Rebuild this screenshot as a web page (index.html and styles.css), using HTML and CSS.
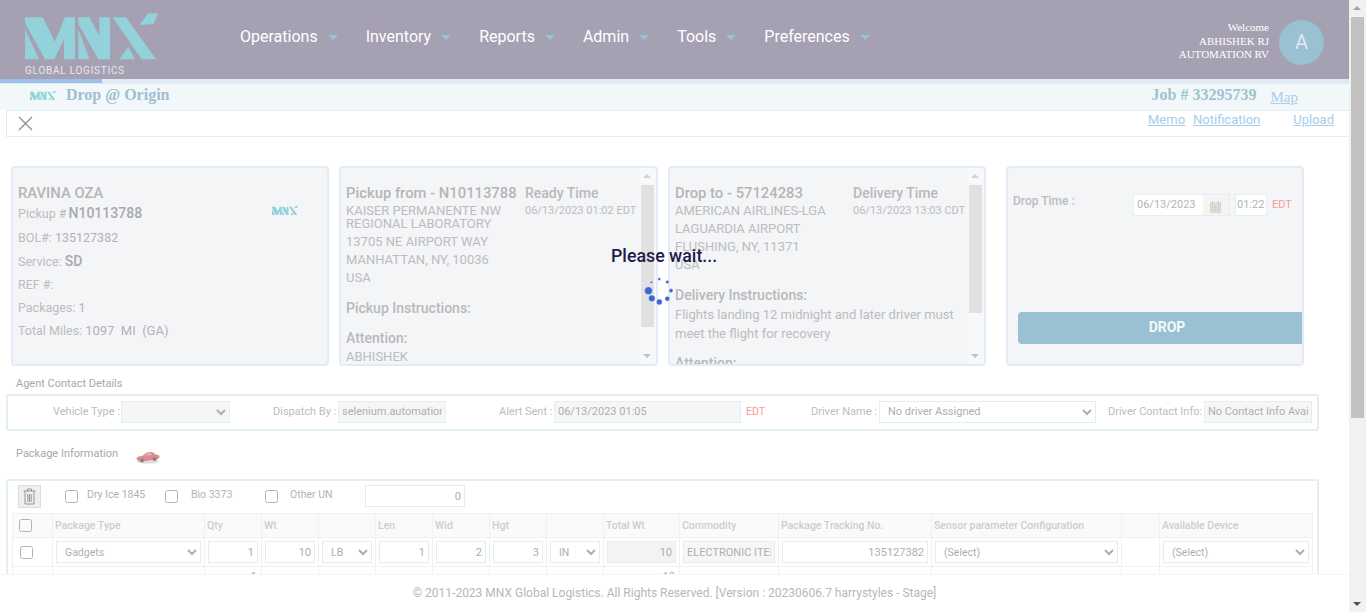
FILE: index.html
```html
<!DOCTYPE html>
<html lang="en">
<head>
    <meta charset="UTF-8">
    <title>Drop @ Origin</title>
    <link rel="stylesheet" href="styles.css">
</head>
<body>
<svg class="defs" width="0" height="0">
    <symbol id="mnx" viewBox="75 39 402 141">
        <polygon points="75,88 117,178 75,178"/>
        <polygon points="75,52 128,52 165,125 195,52 225,52 225,178 192,178 192,118 163,178 135,178 75,70"/>
        <polygon points="235,88 268,178 235,178"/>
        <polygon points="235,52 268,52 298,108 298,52 330,52 330,178 295,178 235,72"/>
        <polygon points="338,52 378,52 468,178 425,178"/>
        <polygon points="418,75 445,40 475,40 460,72"/>
        <polygon points="358,178 385,140 405,178"/>
    </symbol>
</svg>
<div id="page">
    <div id="main">
        <div id="header">
            <div class="brand">
                <svg class="brand-logo"><use href="#mnx"/></svg>
                <div class="brand-text">GLOBAL LOGISTICS</div>
            </div>
            <ul id="nav">
                <li>Operations</li>
                <li>Inventory</li>
                <li>Reports</li>
                <li>Admin</li>
                <li>Tools</li>
                <li>Preferences</li>
            </ul>
            <div class="welcome">Welcome<br>ABHISHEK RJ<br>AUTOMATION RV</div>
            <div class="avatar">A</div>
        </div>
        <div id="progress"><div class="progress-done"></div></div>
        <div id="subhead">
            <svg class="logo-small"><use href="#mnx"/></svg>
            <span class="page-title">Drop @ Origin</span>
            <span class="job-no">Job # 33295739</span>
            <a class="map-link">Map</a>
        </div>
        <div id="toolbar">
            <svg class="close-icon" width="15" height="15" viewBox="0 0 15 15"><path d="M1 1L14 14M14 1L1 14"/></svg>
            <a class="link memo">Memo</a>
            <a class="link notif">Notification</a>
            <a class="link upload">Upload</a>
        </div>

        <div id="cards">
            <div class="card card-job">
                <h3>RAVINA OZA</h3>
                <div class="pickup-row">
                    <span class="muted">Pickup #<b class="big">N10113788</b></span>
                    <svg class="logo-small"><use href="#mnx"/></svg>
                </div>
                <p class="muted">BOL#: <span class="val">135127382</span></p>
                <p class="muted p-service">Service: <b class="mid">SD</b></p>
                <p class="muted p-ref">REF #:</p>
                <p class="muted p-packages">Packages: <span class="val">1</span></p>
                <p class="muted miles">Total Miles: <span class="val miles-val">1097&nbsp; MI &nbsp;(GA)</span></p>
            </div>

            <div class="card card-stop card-pickup">
                <div class="stop-body">
                    <div class="stop-top">
                        <div class="stop-left">
                            <h3>Pickup from - N10113788</h3>
                            <div class="addr tight">KAISER PERMANENTE NW<br>REGIONAL LABORATORY</div>
                            <div class="addr">13705 NE AIRPORT WAY</div>
                            <div class="addr">MANHATTAN, NY, 10036</div>
                            <div class="addr">USA</div>
                        </div>
                        <div class="stop-right">
                            <h4>Ready Time</h4>
                            <div class="stamp">06/13/2023 01:02 EDT</div>
                        </div>
                    </div>
                    <h4 class="sect sect-pickup">Pickup Instructions:</h4>
                    <h4 class="sect sect-attn">Attention:</h4>
                    <div class="addr">ABHISHEK</div>
                </div>
                <div class="mini-scroll">
                    <i class="arr up"></i>
                    <div class="mini-thumb thumb-pickup"></div>
                    <i class="arr down"></i>
                </div>
            </div>

            <div class="card card-stop card-drop">
                <div class="stop-body">
                    <div class="stop-top">
                        <div class="stop-left">
                            <h3>Drop to - 57124283</h3>
                            <div class="addr">AMERICAN AIRLINES-LGA</div>
                            <div class="addr">LAGUARDIA AIRPORT</div>
                            <div class="addr">FLUSHING, NY, 11371</div>
                            <div class="addr">USA</div>
                        </div>
                        <div class="stop-right">
                            <h4>Delivery Time</h4>
                            <div class="stamp">06/13/2023 13:03 CDT</div>
                        </div>
                    </div>
                    <h4 class="sect sect-delivery">Delivery Instructions:</h4>
                    <div class="instr">Flights landing 12 midnight and later driver must meet the flight for recovery</div>
                    <h4 class="sect sect-attn2">Attention:</h4>
                </div>
                <div class="mini-scroll">
                    <i class="arr up"></i>
                    <div class="mini-thumb thumb-drop"></div>
                    <i class="arr down"></i>
                </div>
            </div>

            <div class="card card-action">
                <div class="time-row">
                    <span class="time-label">Drop Time :</span>
                    <div class="date-box">
                        <span class="date-val">06/13/2023</span>
                        <span class="date-addon">
                            <svg width="11" height="12" viewBox="0 0 11 12"><path class="cal" d="M0 2h11v10H0zM2.500 0v3M8.500 0v3"/><path class="cal-grid" d="M0 4.500h11M0 6.800h11M0 9.200h11M2.800 4.500V12M5.500 4.500V12M8.200 4.500V12"/></svg>
                        </span>
                    </div>
                    <span class="time-val">01:22</span>
                    <span class="edt">EDT</span>
                </div>
                <div class="drop-btn">DROP</div>
            </div>
        </div>

        <div class="sect-label agent-label">Agent Contact Details</div>
        <div id="agent" class="box">
            <label class="f-label l-vehicle">Vehicle Type :</label>
            <select class="ctl s-vehicle"><option></option></select>
            <label class="f-label l-dispatch">Dispatch By :</label>
            <input class="ctl ro s-dispatch" readonly value="selenium.automation">
            <label class="f-label l-alert">Alert Sent :</label>
            <input class="ctl ro s-alert" readonly value="06/13/2023 01:05">
            <span class="edt e-alert">EDT</span>
            <label class="f-label l-driver">Driver Name :</label>
            <select class="ctl s-driver"><option>No driver Assigned</option></select>
            <label class="f-label l-contact">Driver Contact Info:</label>
            <input class="ctl ro s-contact" readonly value="No Contact Info Available">
        </div>

        <div class="pkg-title">
            <span class="sect-label">Package Information</span>
            <svg class="car" width="24" height="15" viewBox="0 0 24 15">
                <ellipse cx="12" cy="12.500" rx="11" ry="2" fill="#dcdcdc"/>
                <path d="M0.500 9.500C1 7.500 5 7 7 6.500C9 4.500 11 3 14.500 3C17 3 19 5 20 5.500C22.500 6 24 6.500 23.500 8C23 10 21 10.500 19 10.500L6 12.500C3 12.500 0.500 11.500 0.500 9.500Z" fill="#e2898d"/>
                <path d="M8.500 6.500C10 5 12 4 14.500 4L16 6Z" fill="#c9c9cf"/>
                <circle cx="6" cy="11.500" r="2" fill="#8d7f80"/>
                <circle cx="18.500" cy="10" r="2" fill="#8d7f80"/>
            </svg>
        </div>

        <div id="pkg" class="box">
            <div class="pkg-tools">
                <div class="trash-btn">
                    <svg width="13" height="17" viewBox="0 0 13 17"><path d="M0.500 3h12M4.500 3V1h4v2M2 3v13h9V3M4.800 6v8M6.500 6v8M8.200 6v8"/></svg>
                </div>
                <input class="chk c-dry" type="checkbox"><span class="tool-label t-dry">Dry Ice 1845</span>
                <input class="chk" type="checkbox"><span class="tool-label t-bio">Bio 3373</span>
                <input class="chk" type="checkbox"><span class="tool-label t-other">Other UN</span>
                <input class="ctl num t-num" readonly value="0">
            </div>
            <table class="pkg-table">
                <colgroup>
                    <col class="w40"><col class="w152"><col class="w57"><col class="w57"><col class="w57"><col class="w57">
                    <col class="w57"><col class="w57"><col class="w57"><col class="w76"><col class="w99"><col class="w153">
                    <col class="w190"><col class="w38"><col class="w153">
                </colgroup>
                <tr class="head">
                    <th><input class="chk" type="checkbox"></th>
                    <th>Package Type</th><th>Qty</th><th>Wt</th><th></th><th>Len</th><th>Wid</th><th>Hgt</th><th></th>
                    <th>Total Wt</th><th>Commodity</th><th>Package Tracking No.</th><th>Sensor parameter Configuration</th><th></th><th>Available Device</th>
                </tr>
                <tr class="row">
                    <td><input class="chk" type="checkbox"></td>
                    <td><select class="ctl cell"><option>Gadgets</option></select></td>
                    <td><input class="ctl num cell" readonly value="1"></td>
                    <td><input class="ctl num cell" readonly value="10"></td>
                    <td><select class="ctl cell"><option>LB</option></select></td>
                    <td><input class="ctl num cell" readonly value="1"></td>
                    <td><input class="ctl num cell" readonly value="2"></td>
                    <td><input class="ctl num cell" readonly value="3"></td>
                    <td><select class="ctl cell"><option>IN</option></select></td>
                    <td><input class="ctl num ro cell" readonly value="10"></td>
                    <td><input class="ctl ro cell" readonly value="ELECTRONIC ITEM"></td>
                    <td><input class="ctl num cell" readonly value="135127382"></td>
                    <td><select class="ctl cell"><option>(Select)</option></select></td>
                    <td></td>
                    <td><select class="ctl cell"><option>(Select)</option></select></td>
                </tr>
                <tr class="total">
                    <td></td><td></td><td>1</td><td></td><td></td><td></td><td></td><td></td><td></td><td>10</td><td></td><td></td><td></td><td></td><td></td>
                </tr>
            </table>
        </div>

        <div id="footer">© 2011-2023 MNX Global Logistics. All Rights Reserved. [Version : 20230606.7 harrystyles - Stage]</div>
    </div>
    <div id="scrollbar">
        <i class="arr up dark"></i>
        <div class="thumb"></div>
        <i class="arr down black"></i>
    </div>
</div>

<div id="loading">
    <div class="loading-text">Please wait...</div>
    <svg class="spinner" width="32" height="30" viewBox="644 277 32 30">
        <g fill="#3f66cf" stroke="#fff" stroke-width=".5">
            <circle cx="648.500" cy="290.700" r="4"/>
            <circle cx="651.800" cy="298.300" r="3.400"/>
            <circle cx="659.300" cy="302" r="3"/>
            <circle cx="667.300" cy="298.700" r="2.500"/>
            <circle cx="671" cy="290.700" r="2.100"/>
            <circle cx="667.300" cy="282" r="1.800"/>
            <circle cx="659.300" cy="279" r="1.500"/>
            <circle cx="651.300" cy="282.300" r="1.200"/>
        </g>
    </svg>
</div>
</body>
</html>
```

FILE: styles.css
```css
*{
    margin:0;
    padding:0;
    box-sizing:border-box;
}
html,body{
    height:612px;
    overflow:hidden;
    background:#fff;
    font-family:Roboto,"Liberation Sans",sans-serif;
}
ul{
    list-style:none;
}
.defs{
    position:absolute;
}
#page{
    display:flex;
    width:1366px;
    height:612px;
}
#main{
    width:1349px;
    height:612px;
    overflow:hidden;
    position:relative;
}

/* header */
#header{
    height:79px;
    background:#a5a1b3;
    display:flex;
    align-items:center;
    padding-left:25px;
}
.brand{
    width:215px;
    height:79px;
    padding-top:13px;
}
.brand-logo{
    display:block;
    width:134px;
    height:47px;
    fill:#94d2db;
}
.brand-text{
    margin-top:5px;
    font-size:10px;
    line-height:12px;
    letter-spacing:.75px;
    color:#e6e7ec;
}
#nav{
    display:flex;
    flex:1;
    height:79px;
    align-items:center;
    padding-bottom:6px;
}
#nav li{
    font-size:16px;
    color:#fff;
    margin-right:28px;
    display:flex;
    align-items:center;
}
#nav li:after{
    content:"";
    margin-left:10px;
    margin-top:2px;
    border-top:5px solid #8fc5dd;
    border-left:5px solid transparent;
    border-right:5px solid transparent;
}
.welcome{
    font-family:"Liberation Serif",serif;
    font-size:11px;
    line-height:13.500px;
    color:#fff;
    text-align:right;
    margin-right:10px;
    padding-top:4px;
}
.avatar{
    width:45px;
    height:45px;
    border-radius:50%;
    background:#99c1d2;
    color:#dbe9f0;
    font-size:20px;
    line-height:45px;
    text-align:center;
    margin-right:25px;
    margin-top:6px;
}
#progress{
    height:5px;
    background:#dfeaf3;
}
.progress-done{
    width:102px;
    height:4px;
    background:#9bc0e8;
}

/* sub header */
#subhead{
    height:26px;
    background:#f2f7fa;
    display:flex;
    align-items:center;
    padding-left:30px;
    font-family:"Liberation Serif",serif;
}
.logo-small{
    width:26px;
    height:11px;
    fill:#94d2db;
    margin-bottom:3px;
}
.page-title{
    margin-left:10px;
    font-size:16px;
    font-weight:bold;
    color:#9cc0d4;
    margin-bottom:4px;
}
.job-no{
    margin-left:auto;
    font-size:16px;
    font-weight:bold;
    color:#9fc3d2;
    margin-bottom:5px;
}
.map-link{
    margin-left:14px;
    margin-right:51px;
    font-size:15px;
    color:#a6cfe9;
    text-decoration:underline;
    margin-top:1px;
}
#toolbar{
    height:27px;
    margin-left:6px;
    border:1px solid #e0f0f2;
    border-right:0;
    display:flex;
    align-items:flex-start;
    padding-left:11px;
    padding-top:5px;
}
.close-icon{
    fill:none;
    stroke:#8e8e8e;
    stroke-width:1.300;
}
.link{
    font-size:13px;
    color:#a8cdea;
    text-decoration:underline;
    line-height:15px;
    margin-top:-4px;
}
.memo{
    margin-left:1115px;
}
.notif{
    margin-left:8px;
}
.upload{
    margin-left:33px;
}

/* cards */
#cards{
    display:flex;
    height:200px;
    margin-top:29px;
    padding-left:11px;
}
.card{
    height:200px;
    border:2px solid #e3ecf6;
    border-radius:4px;
    background:#f3f5f7;
    overflow:hidden;
    color:#b4b4b8;
}
.card h3{
    font-size:14.800px;
    line-height:18px;
    font-weight:500;
    color:#b5b5b7;
}
.card h4{
    font-size:14px;
    line-height:18px;
    font-weight:500;
    color:#b9b9bb;
}
.card-job{
    width:318px;
    padding:16px 0 0 5px;
}
.pickup-row{
    display:flex;
    align-items:center;
    height:20px;
    margin-top:1px;
    padding-right:29px;
}
.pickup-row .logo-small{
    margin-left:auto;
    margin-top:-6px;
    margin-bottom:0;
}
.muted{
    font-size:12.500px;
    color:#bcbcc0;
}
.card-job p{
    line-height:17px;
    margin-top:6px;
}
.card-job .p-service{
    margin-top:7px;
}
.card-job .p-ref{
    margin-top:6px;
}
.card-job .p-packages{
    margin-top:6px;
}
.card-job .miles{
    display:flex;
    align-items:center;
    margin-top:5px;
}
.big{
    margin-left:2px;
    font-size:14px;
    font-weight:500;
    color:#a9a9b0;
}
.mid{
    font-size:14px;
    font-weight:500;
    color:#a9a9b0;
}
.val{
    color:#b4b0bb;
}
.miles-val{
    margin-left:3px;
    margin-top:1px;
    font-size:13px;
}
.card-stop{
    display:flex;
    margin-left:10px;
}
.card-pickup{
    width:319px;
}
.card-drop{
    width:318px;
}
.stop-body{
    flex:1;
    overflow:hidden;
    padding:16px 0 0 5px;
}
.stop-top{
    display:flex;
}
.card-pickup .stop-left{
    width:179px;
}
.card-drop .stop-left{
    width:178px;
}
.stop-right{
    white-space:nowrap;
}
.stamp{
    font-size:11px;
    line-height:18px;
    color:#bcbcc0;
}
.addr{
    font-size:13px;
    line-height:18px;
    color:#bcbcc0;
    white-space:nowrap;
}
.addr.tight{
    line-height:13px;
    padding:2px 0 3px;
}
.sect-pickup{
    margin-top:12px;
}
.sect-attn{
    margin-top:12px;
}
.sect-attn + .addr{
    margin-top:1px;
}
.sect-delivery{
    margin-top:12px;
}
.sect-attn2{
    margin-top:11px;
}
.instr{
    font-size:13px;
    line-height:19px;
    color:#bcbcc0;
    margin-top:1px;
}
.mini-scroll{
    width:17px;
    flex:none;
    background:#f7f8fa;
    padding-top:17px;
    position:relative;
}
.mini-thumb{
    margin:0 2px;
    background:#e1e1e1;
}
.thumb-pickup{
    height:142px;
}
.thumb-drop{
    height:128px;
}
.arr{
    position:absolute;
    left:4px;
    border-left:4px solid transparent;
    border-right:4px solid transparent;
}
.arr.up{
    top:6px;
    border-bottom:4px solid #d0d0d0;
}
.arr.down{
    bottom:6px;
    border-top:4px solid #c4c4c4;
}
.card-action{
    width:298px;
    margin-left:20px;
    padding:26px 0 0 5px;
}
.time-row{
    display:flex;
    align-items:flex-start;
    height:22px;
}
.time-label{
    width:120px;
    font-size:12px;
    font-weight:500;
    line-height:14px;
    color:#bcbcc0;
}
.date-box{
    display:flex;
    width:97px;
    height:22px;
    border:1px solid #e4eef1;
    background:#fff;
}
.date-val{
    width:69px;
    font-size:11px;
    line-height:20px;
    padding-left:3px;
    color:#b4b4b8;
}
.date-addon{
    flex:1;
    background:#f3f4f4;
    padding:3px 0 0 7px;
}
.cal{
    fill:#e9e6dd;
    stroke:#c9c4b8;
    stroke-width:.8;
}
.cal-grid{
    fill:none;
    stroke:#c9c4b8;
    stroke-width:.6;
}
.time-val{
    width:32px;
    height:22px;
    margin-left:5px;
    border:1px solid #e0eff2;
    background:#fff;
    font-size:11px;
    line-height:20px;
    padding-left:1px;
    color:#b4b4b8;
}
.edt{
    font-size:11px;
    color:#f79a9a;
}
.time-row .edt{
    margin-left:5px;
    line-height:22px;
}
.drop-btn{
    height:32px;
    margin-top:96px;
    margin-left:5px;
    width:298px;
    border-radius:4px 0 0 4px;
    background:#9ac1d2;
    color:#f4f8fa;
    font-size:14px;
    font-weight:700;
    line-height:31px;
    text-align:center;
}

/* contact and package boxes */
.sect-label{
    font-size:11px;
    color:#a7a7ad;
}
.agent-label{
    margin:11px 0 0 16px;
    line-height:13px;
}
.box{
    margin-left:6px;
    width:1313px;
    border:2px solid #e3f0f2;
    border-radius:2px;
}
#agent{
    height:37px;
    margin-top:4px;
    display:flex;
    align-items:center;
    padding-bottom:2px;
}
.f-label{
    font-size:11px;
    color:#bcbcc0;
    white-space:nowrap;
}
.ctl{
    height:22px;
    border:1px solid #e2eef1;
    background:#fff;
    font-family:Roboto,"Liberation Sans",sans-serif;
    font-size:11px;
    color:#aeaeb2;
    border-radius:0;
    outline:none;
    padding:0 3px;
}
.ro{
    background:#f6f6f6;
}
select.ctl{
    padding:0 0 0 4px;
}
.l-vehicle{
    margin-left:45px;
    width:68px;
}
.s-vehicle{
    width:109px;
    background:#f6f6f6;
}
.l-dispatch{
    margin-left:43px;
    width:65px;
}
.s-dispatch{
    width:108px;
}
.l-alert{
    margin-left:53px;
    width:55px;
}
.s-alert{
    width:187px;
}
.e-alert{
    margin-left:5px;
    width:65px;
    font-size:10.500px;
}
.l-driver{
    width:68px;
}
.s-driver{
    width:217px;
}
.l-contact{
    margin-left:12px;
    width:96px;
}
.s-contact{
    width:108px;
}
.pkg-title{
    height:15px;
    margin:18px 0 0 16px;
    display:flex;
    align-items:flex-start;
    line-height:10px;
}
.car{
    margin-left:18px;
}
#pkg{
    margin-top:15px;
    height:110px;
    padding:4px 5px 0 4px;
    border-bottom:0;
}
.pkg-tools{
    display:flex;
    align-items:flex-start;
    height:28px;
    padding-left:6px;
}
.trash-btn{
    width:23px;
    height:23px;
    border:1px solid #ddd;
    background:#efefef;
    padding:2px 0 0 4px;
}
.trash-btn svg{
    fill:none;
    stroke:#8b8b8b;
    stroke-width:.9;
}
.chk{
    width:13px;
    height:13px;
    opacity:.55;
    margin:0;
    flex:none;
}
.pkg-tools .chk{
    margin-top:5px;
}
.tool-label{
    font-size:10.500px;
    line-height:20px;
    color:#b2b2b6;
    white-space:nowrap;
}
.c-dry{
    margin-left:24px;
}
.t-dry{
    margin-left:9px;
    width:78px;
}
.t-bio{
    margin-left:13px;
    width:74px;
}
.t-other{
    margin-left:12px;
    width:75px;
}
.t-num{
    width:100px;
}
.num{
    text-align:right;
}
.num.ro{
    background:#f3f3f3;
}
.pkg-table{
    width:1299px;
    table-layout:fixed;
    border-collapse:collapse;
}
.w40{width:40px;}
.w152{width:152px;}
.w57{width:57px;}
.w76{width:76px;}
.w99{width:99px;}
.w153{width:153px;}
.w190{width:190px;}
.w38{width:38px;}
.pkg-table th,.pkg-table td{
    border:1px solid #eef2f2;
    overflow:hidden;
}
.pkg-table th{
    height:24px;
    background:#fafafa;
    font-size:10.500px;
    font-weight:500;
    color:#cdcdcf;
    text-align:left;
    padding-left:2px;
}
.pkg-table .chk{
    display:block;
    margin-left:4px;
}
.row td{
    height:29px;
    padding:0 3px;
}
.cell{
    width:100%;
    display:block;
}
select.cell{
    font-size:10.500px;
}
.total td{
    height:20px;
    font-size:11px;
    color:#aeaeb2;
    text-align:right;
    vertical-align:top;
    padding:3px 4px 0 0;
}

/* footer sits over the scrolled form */
#footer{
    position:absolute;
    left:0;
    right:0;
    top:574px;
    height:38px;
    background:#fff;
    border-top:1px solid #f6f6f6;
    text-align:center;
    font-size:12px;
    line-height:37px;
    color:#b7b7b9;
}

/* page scrollbar */
#scrollbar{
    width:17px;
    height:612px;
    background:#f1f1f1;
    position:relative;
    padding-top:17px;
}
#scrollbar .thumb{
    margin-left:2px;
    width:13px;
    height:401px;
    background:#c1c1c1;
}
#scrollbar .arr.up.dark{
    border-bottom-color:#a3a3a3;
}
#scrollbar .arr.down.black{
    border-top-color:#505050;
}

/* please wait layer */
#loading{
    position:absolute;
    left:611px;
    top:245px;
    width:110px;
}
.loading-text{
    font-size:17.800px;
    font-weight:500;
    line-height:22px;
    color:#1f1b4d;
    white-space:nowrap;
}
.spinner{
    display:block;
    margin:10px 0 0 33px;
}
```
